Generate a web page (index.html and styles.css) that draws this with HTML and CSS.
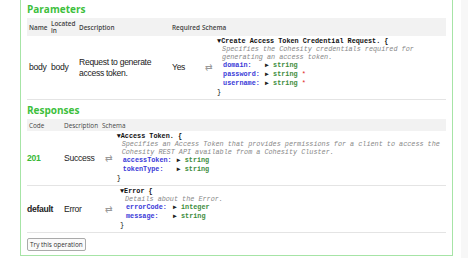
FILE: index.html
```html
<!DOCTYPE html>
<html lang="en">
<head>
    <meta charset="UTF-8">
    <meta name="viewport" content="width=device-width, initial-scale=1.0">
    <title>Authentication - POST /public/accessTokens</title>
    <link rel="stylesheet" href="styles.css">
</head>
<body>

    <div class="page">
        <div class="operation">

            <h4>Parameters</h4>
            <table class="params">
                <thead>
                    <tr>
                        <th class="c-name">Name</th>
                        <th class="c-loc">Located in</th>
                        <th class="c-desc">Description</th>
                        <th class="c-req">Required</th>
                        <th>Schema</th>
                    </tr>
                </thead>
                <tbody>
                    <tr class="row param-row">
                        <td>body</td>
                        <td>body</td>
                        <td>Request to generate access token.</td>
                        <td>Yes</td>
                        <td>
                            <div class="schema">
                                <span class="swap">&#8644;</span>
                                <div class="model">
                                    <div class="title">&#9660;Create Access Token Credential Request. {</div>
                                    <div class="note">Specifies the Cohesity credentials required for generating an access token.</div>
                                    <div class="props">
                                        <div class="prop-line"><span class="prop">domain:</span><span class="tri">&#9654;</span> <span class="type">string</span></div>
                                        <div class="prop-line"><span class="prop">password:</span><span class="tri">&#9654;</span> <span class="type">string</span> <span class="req">*</span></div>
                                        <div class="prop-line"><span class="prop">username:</span><span class="tri">&#9654;</span> <span class="type">string</span> <span class="req">*</span></div>
                                    </div>
                                    <div class="close">}</div>
                                </div>
                            </div>
                        </td>
                    </tr>
                </tbody>
            </table>

            <h4 class="next">Responses</h4>
            <table class="responses">
                <thead>
                    <tr>
                        <th class="c-code">Code</th>
                        <th class="c-rdesc">Description</th>
                        <th>Schema</th>
                    </tr>
                </thead>
                <tbody>
                    <tr class="row">
                        <td class="code ok">201</td>
                        <td>Success</td>
                        <td>
                            <div class="schema">
                                <span class="swap">&#8644;</span>
                                <div class="model">
                                    <div class="title">&#9660;Access Token. {</div>
                                    <div class="note">Specifies an Access Token that provides permissions for a client to access the Cohesity REST API available from a Cohesity Cluster.</div>
                                    <div class="props">
                                        <div class="prop-line"><span class="prop w-token">accessToken:</span><span class="tri">&#9654;</span> <span class="type">string</span></div>
                                        <div class="prop-line"><span class="prop w-token">tokenType:</span><span class="tri">&#9654;</span> <span class="type">string</span></div>
                                    </div>
                                    <div class="close">}</div>
                                </div>
                            </div>
                        </td>
                    </tr>
                    <tr class="row">
                        <td class="code">default</td>
                        <td>Error</td>
                        <td>
                            <div class="schema">
                                <span class="swap">&#8644;</span>
                                <div class="model">
                                    <div class="title">&#9660;Error {</div>
                                    <div class="note">Details about the Error.</div>
                                    <div class="props">
                                        <div class="prop-line"><span class="prop w-error">errorCode:</span><span class="tri">&#9654;</span> <span class="type">integer</span></div>
                                        <div class="prop-line"><span class="prop w-error">message:</span><span class="tri">&#9654;</span> <span class="type">string</span></div>
                                    </div>
                                    <div class="close">}</div>
                                </div>
                            </div>
                        </td>
                    </tr>
                </tbody>
            </table>

            <button class="try">Try this operation</button>
        </div>
    </div>

</body>
</html>
```

FILE: styles.css
```css
body {
    margin: 0;
    background: #f7f7f7;
    font-family: "Liberation Sans", Arial, sans-serif;
    color: #222;
}
.page {
    width: 461px;
    height: 258px;
    background: #ffffff;
}
.operation {
    margin-left: 20px;
    width: 419px;
    padding: 1px 6px 4px 6px;
    border: 1px solid #a6e4a6;
    border-top: none;
    background: #ffffff;
}
h4 {
    margin: 0;
    font-family: "Open Sans", sans-serif;
    font-size: 10px;
    line-height: 17px;
    font-weight: bold;
    color: #3dbf3d;
}
h4.next {
    margin-top: 2px;
}
table {
    border-collapse: collapse;
}
.params,
.responses {
    width: 100%;
    table-layout: fixed;
}
th {
    background: #f2f2f2;
    font-family: "Open Sans", sans-serif;
    font-size: 6.4px;
    font-weight: 600;
    line-height: 7px;
    color: #444;
    text-align: left;
    padding: 2px 2px;
    vertical-align: middle;
}
.params th {
    height: 14px;
}
.responses th {
    height: 8px;
    font-weight: normal;
}
.c-name { width: 18px; }
.c-loc { width: 24px; }
.c-desc { width: 89px; }
.c-req { width: 26px; }
.c-code { width: 31px; }
.c-rdesc { width: 34px; }
.row > td {
    font-size: 8.6px;
    letter-spacing: -0.3px;
    line-height: 11px;
    padding: 0 2px;
    vertical-align: middle;
    border-bottom: 1.5px solid #e4e4e4;
}
.row > td:last-child {
    padding-right: 0;
}
.param-row > td {
    height: 61px;
}
.code {
    font-weight: bold;
}
.row > .code {
    padding-left: 0;
}
.ok {
    color: #38b938;
}
.schema {
    display: flex;
    align-items: center;
    gap: 4px;
}
.swap {
    color: #999;
    font-size: 9px;
    width: 11px;
    padding-left: 3px;
}
.model {
    font-family: "Liberation Mono", "Courier New", monospace;
    font-size: 6.8px;
    line-height: 8px;
    letter-spacing: 0;
    padding: 1px 0 2px 0;
}
.title {
    font-weight: bold;
    color: #111;
}
.note {
    font-style: italic;
    color: #888;
    padding-left: 5px;
}
.props {
    margin-left: 6px;
}
.prop-line {
    line-height: 9px;
}
.prop {
    display: inline-block;
    color: #3a3ad8;
    font-weight: bold;
    width: 42px;
}
.w-token { width: 54px; }
.w-error { width: 47px; }
.tri {
    color: #222;
    font-size: 6.5px;
}
.type {
    color: #3c8c3c;
    font-weight: bold;
}
.req {
    color: #e02020;
}
.close {
    color: #111;
    line-height: 9px;
}
.try {
    margin-top: 5px;
    font-family: "Open Sans", sans-serif;
    font-size: 6.4px;
    color: #333;
    background: #fafafa;
    border: 1px solid #aaa;
    border-radius: 2px;
    padding: 1px 2px;
    height: 13px;
    line-height: 9px;
}
```
